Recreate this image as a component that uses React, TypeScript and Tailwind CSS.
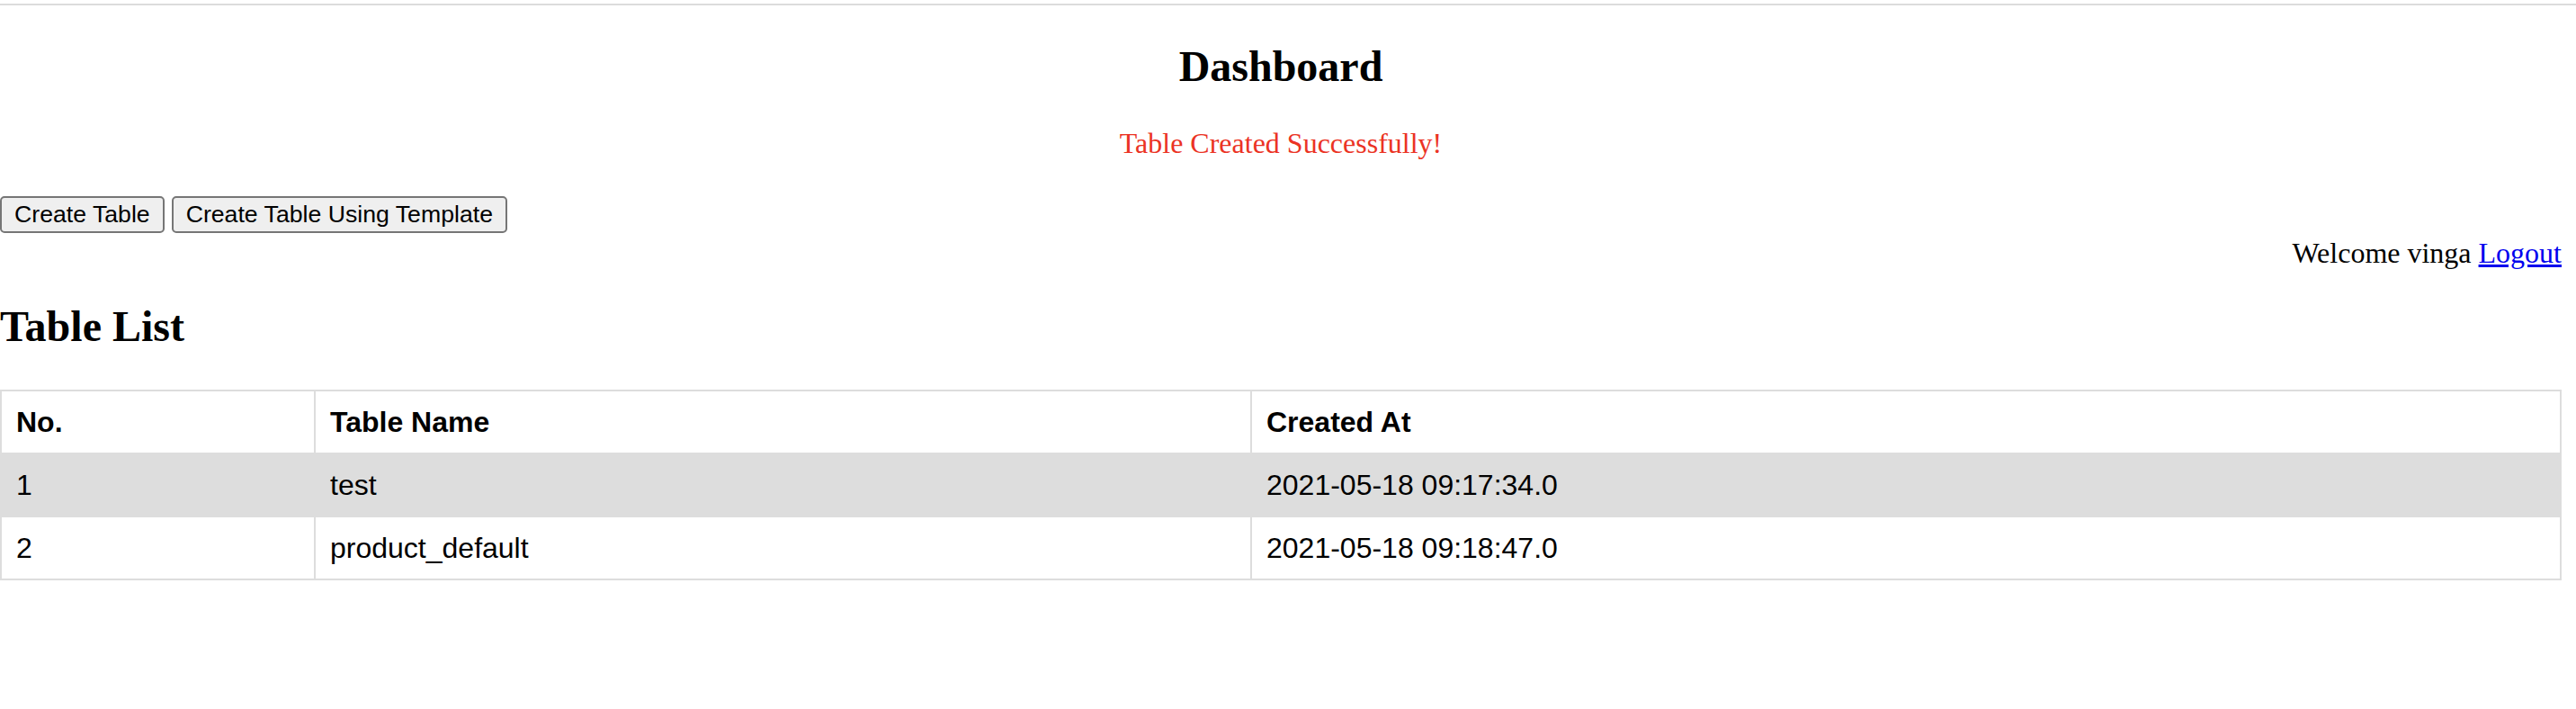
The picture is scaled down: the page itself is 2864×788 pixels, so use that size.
import React from "react";

const rows = [
  { no: "1", name: "test", created: "2021-05-18 09:17:34.0", hover: true },
  { no: "2", name: "product_default", created: "2021-05-18 09:18:47.0", hover: false },
];

export default function App() {
  return (
    <div className="w-[2864px] min-h-[788px] bg-white text-black">
      <div className="pt-[4px]">
        <div className="h-[2px] w-full bg-[#dcdcdc]" />
      </div>
      <div className="mr-[16px] font-['Liberation_Serif',_'Times_New_Roman',_serif]">
        <h2 className="mt-[41px] text-center text-[48px] font-bold leading-[53px]">Dashboard</h2>
        <p className="mt-[41px] text-center text-[32px] leading-[36px] text-[#eb3324]">
          Table Created Successfully!
        </p>
        <div className="mt-[41px] flex items-center gap-[8px] font-['Liberation_Sans',_Arial,_sans-serif]">
          <button className="flex h-[41px] items-center rounded-[5px] border-2 border-[#767676] bg-[#efefef] px-[14px] text-[26.67px] leading-[31px] text-black">
            Create Table
          </button>
          <button className="flex h-[41px] items-center rounded-[5px] border-2 border-[#767676] bg-[#efefef] px-[14px] text-[26.67px] leading-[31px] text-black">
            Create Table Using Template
          </button>
        </div>
        <div className="mt-[4px] text-right text-[32px] leading-[36px]">
          Welcome vinga{" "}
          <a href="#" className="text-[#0000ee] underline">
            Logout
          </a>
        </div>
        <h2 className="mt-[37px] text-[48px] font-bold leading-[53px]">Table List</h2>
        <table className="mt-[44px] w-full table-fixed border-collapse font-['Liberation_Sans',_Arial,_sans-serif] text-[32px] leading-[36px]">
          <colgroup>
            <col className="w-[349px]" />
            <col className="w-[1041px]" />
            <col />
          </colgroup>
          <thead>
            <tr className="bg-white">
              <th className="border-2 border-[#dddddd] px-[16px] py-[16px] text-left font-bold">No.</th>
              <th className="border-2 border-[#dddddd] px-[16px] py-[16px] text-left font-bold">Table Name</th>
              <th className="border-2 border-[#dddddd] px-[16px] py-[16px] text-left font-bold">Created At</th>
            </tr>
          </thead>
          <tbody>
            {rows.map((r) => (
              <tr key={r.no} className={r.hover ? "bg-[#dddddd]" : "bg-white"}>
                <td className="border-2 border-[#dddddd] px-[16px] py-[16px]">{r.no}</td>
                <td className="border-2 border-[#dddddd] px-[16px] py-[16px]">{r.name}</td>
                <td className="border-2 border-[#dddddd] px-[16px] py-[16px]">{r.created}</td>
              </tr>
            ))}
          </tbody>
        </table>
      </div>
    </div>
  );
}
